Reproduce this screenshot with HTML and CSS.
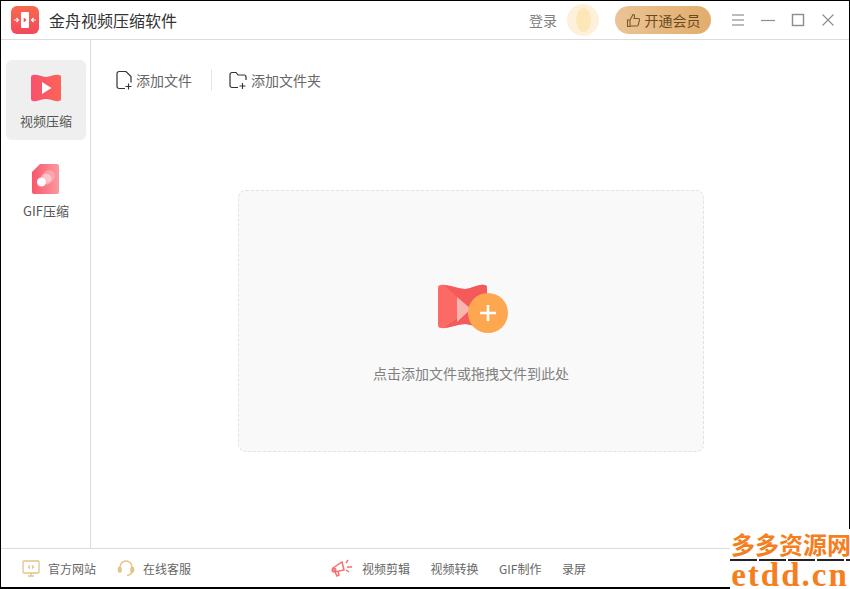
FILE: index.html
```html
<!DOCTYPE html>
<html lang="zh-CN">
<head>
  <meta charset="UTF-8">
  <title>金舟视频压缩软件</title>
  <link rel="stylesheet" href="styles.css">
</head>
<body>
  <div class="window">
    <header class="titlebar">
      <svg class="logo" width="28" height="28" viewBox="0 0 28 28">
        <defs>
          <linearGradient id="logoGrad" x1="0" y1="0" x2="0" y2="1">
            <stop offset="0" stop-color="#f76a4c"/>
            <stop offset="1" stop-color="#f4485c"/>
          </linearGradient>
        </defs>
        <rect width="28" height="28" rx="6" fill="url(#logoGrad)"/>
        <rect x="10" y="6" width="8" height="16" rx="1" fill="#fff"/>
        <path d="M12.700 11.500l3 2.500-3 2.500z" fill="#f4534f"/>
        <path d="M3 14h4M5.500 12l2 2-2 2M25 14h-4M22.500 12l-2 2 2 2" stroke="#fff" stroke-width="1.200" fill="none"/>
      </svg>
      <span class="app-name">金舟视频压缩软件</span>
      <div class="titlebar-right">
        <span class="login">登录</span>
        <div class="avatar"><div class="avatar-inner"></div></div>
        <button class="vip-btn">
          <svg width="15" height="15" viewBox="0 0 15 15" fill="none" stroke="#7a5526" stroke-width="1.100">
            <path d="M1.500 7h2.500v6.500h-2.500zM4 7l3-5.500c1.200 0 1.800 1 1.500 2.200l-.5 1.800h4.500c.8 0 1.200.7 1 1.400l-1.300 5.200c-.2.500-.5.900-1.100.900h-7.600"/>
          </svg>
          开通会员
        </button>
        <div class="win-controls">
          <svg width="14" height="14" viewBox="0 0 14 14" stroke="#a6a6a6" stroke-width="1.500"><path d="M1 2h12M1 7h12M1 12h12"/></svg>
          <svg width="14" height="14" viewBox="0 0 14 14" stroke="#8c8c8c" stroke-width="1.200"><path d="M0 7.500h14"/></svg>
          <svg width="14" height="14" viewBox="0 0 14 14" fill="none" stroke="#8c8c8c" stroke-width="1.400"><rect x="1.500" y="1.500" width="11" height="11"/></svg>
          <svg width="14" height="14" viewBox="0 0 14 14" stroke="#8c8c8c" stroke-width="1.100"><path d="M1.500 1.500l11 11M12.500 1.500l-11 11"/></svg>
        </div>
      </div>
    </header>

    <div class="body-row">
      <nav class="sidebar">
        <div class="side-item active">
          <svg width="32" height="30" viewBox="0 0 32 30">
            <defs>
              <linearGradient id="videoGrad" x1="0" y1="0" x2="1" y2="0">
                <stop offset="0" stop-color="#f9506d"/>
                <stop offset="1" stop-color="#fb6459"/>
              </linearGradient>
            </defs>
            <path d="M3 1C8 0 11 3 16 3S24 0 29 1a2 2 0 0 1 2 2V25a2 2 0 0 1-2 2C24 28 21 25 16 25S8 28 3 27a2 2 0 0 1-2-2V3a2 2 0 0 1 2-2z" fill="url(#videoGrad)"/>
            <path d="M12 8l9.500 6-9.500 6z" fill="#fff"/>
          </svg>
          <span>视频压缩</span>
        </div>
        <div class="side-item">
          <svg width="30" height="30" viewBox="0 0 30 30">
            <defs>
              <linearGradient id="gifGrad" x1="0" y1="0" x2="1" y2="0">
                <stop offset="0" stop-color="#f9566b"/>
                <stop offset="1" stop-color="#fb9a9f"/>
              </linearGradient>
            </defs>
            <path d="M9 0h17a2 2 0 0 1 2 2v26a2 2 0 0 1-2 2H3a2 2 0 0 1-2-2V8z" fill="url(#gifGrad)"/>
            <circle cx="18" cy="12" r="6" fill="#fff" opacity=".25"/>
            <circle cx="15" cy="15" r="5.500" fill="#fff" opacity=".4"/>
            <circle cx="10.500" cy="18" r="4.500" fill="#fff"/>
          </svg>
          <span>GIF压缩</span>
        </div>
      </nav>

      <main class="main">
        <div class="toolbar">
          <div class="tool">
            <svg width="16" height="20" viewBox="0 0 16 20" fill="none" stroke="#333" stroke-width="1.200">
              <path d="M9 18.500H3a2 2 0 0 1-2-2v-13a2 2 0 0 1 2-2h7l5 5v6"/>
              <path d="M9.500 16.500h6M12.500 13.500v6" stroke-width="1.100"/>
            </svg>
            <span>添加文件</span>
          </div>
          <div class="tool-sep"></div>
          <div class="tool">
            <svg width="18" height="19" viewBox="0 0 18 19" fill="none" stroke="#333" stroke-width="1.200">
              <path d="M9 16.500H3a2 2 0 0 1-2-2v-11a2 2 0 0 1 2-2h4l2 2.500h6a2 2 0 0 1 2 2v3"/>
              <path d="M10.500 15h6M13.500 12v6" stroke-width="1.100"/>
            </svg>
            <span>添加文件夹</span>
          </div>
        </div>

        <div class="dropzone-wrap">
          <div class="dropzone">
            <svg class="drop-icon" width="72" height="52" viewBox="0 0 72 52">
              <path d="M5 2C12 1 22 6 29 6S42 1 48 2a3 3 0 0 1 3 3V42a3 3 0 0 1-3 3C42 46 36 41 29 41S12 46 5 45a3 3 0 0 1-3-3V5a3 3 0 0 1 3-3z" fill="#fb6a64"/>
              <path d="M8 2C14 3 22 6 29 6S42 1 48 2a3 3 0 0 1 3 3V42a3 3 0 0 1-3 3C42 46 36 41 29 41S16 44 8 45L34 26z" fill="#f55a5a"/>
              <path d="M21 14l14 12-14 13z" fill="#f9b5b0"/>
              <circle cx="52" cy="30" r="20" fill="#fda851"/>
              <path d="M44 30h16M52 22v16" stroke="#fff" stroke-width="2.600"/>
            </svg>
            <p class="drop-tip">点击添加文件或拖拽文件到此处</p>
          </div>
        </div>
      </main>
    </div>

    <footer class="footer">
      <div class="foot-left">
        <div class="foot-link">
          <svg width="18" height="17" viewBox="0 0 18 17" fill="none" stroke="#e3c488" stroke-width="1.300">
            <rect x="1" y="1" width="16" height="12" rx="1"/>
            <path d="M6 16h6M9 13v3M8 5.500l-1.500 1.500 1.500 1.500M10 5.500l1.500 1.500-1.500 1.500"/>
          </svg>
          <span>官方网站</span>
        </div>
        <div class="foot-link">
          <svg width="18" height="18" viewBox="0 0 18 18" fill="none" stroke="#e3c488" stroke-width="1.500">
            <path d="M3 10V8a6 6 0 0 1 12 0v2M15 12c0 2.500-2 4-5 4.500"/>
            <rect x="1.500" y="8.500" width="2.500" height="4.500" rx="1" fill="#e3c488"/>
            <rect x="14" y="8.500" width="2.500" height="4.500" rx="1" fill="#e3c488"/>
          </svg>
          <span>在线客服</span>
        </div>
      </div>
      <div class="foot-tools">
        <svg width="22" height="20" viewBox="0 0 22 20" fill="none" stroke="#f4706e" stroke-width="1.500">
          <path d="M2 10l9-6 2 8-9 2zM4 14l2 4 2-1-1-4"/>
          <circle cx="3" cy="12" r="1.800"/>
          <path d="M15 5l2-3M16 9h5M15 12l3 2"/>
        </svg>
        <span>视频剪辑</span>
        <span>视频转换</span>
        <span>GIF制作</span>
        <span>录屏</span>
      </div>
    </footer>

    <div class="watermark">
      <div class="wm-cn">多多资源网</div>
      <div class="wm-line"></div>
      <div class="wm-en">etdd.cn</div>
    </div>
  </div>
</body>
</html>
```

FILE: styles.css
```css
* {
  box-sizing: border-box;
}
html, body {
  margin: 0;
  padding: 0;
}
body {
  font-family: "Noto Sans CJK SC", "Liberation Sans", sans-serif;
  background: #fff;
  color: #666;
}
.window {
  position: relative;
  width: 850px;
  height: 589px;
  border: 1px solid #000;
  border-bottom-width: 2px;
  display: flex;
  flex-direction: column;
  background: #fff;
}

/* title bar */
.titlebar {
  height: 39px;
  flex: none;
  display: flex;
  align-items: center;
  padding-left: 10px;
  border-bottom: 1px solid #dcdcdc;
}
.logo {
  flex: none;
}
.app-name {
  margin-left: 10px;
  font-size: 16px;
  color: #333;
}
.titlebar-right {
  margin-left: auto;
  display: flex;
  align-items: center;
}
.login {
  font-size: 14px;
  color: #808080;
}
.avatar {
  width: 32px;
  height: 32px;
  margin-left: 10px;
  border-radius: 50%;
  background: #fdf1dc;
  display: flex;
  align-items: center;
  justify-content: center;
}
.avatar-inner {
  width: 15px;
  height: 24px;
  border-radius: 50%;
  background: #fde7b8;
}
.vip-btn {
  width: 96px;
  height: 28px;
  margin-left: 16px;
  padding: 0;
  border: none;
  border-radius: 14px;
  background: linear-gradient(90deg, #eac497, #e2ad6c);
  color: #6b4a20;
  font-family: inherit;
  font-size: 14px;
  display: flex;
  align-items: center;
  justify-content: center;
  gap: 4px;
}
.win-controls {
  display: flex;
  align-items: center;
  gap: 16px;
  margin-left: 20px;
  margin-right: 14px;
}

/* body */
.body-row {
  flex: 1;
  display: flex;
  min-height: 0;
}
.sidebar {
  width: 90px;
  flex: none;
  border-right: 1px solid #dcdcdc;
  padding: 20px 4px 0 5px;
  display: flex;
  flex-direction: column;
  gap: 10px;
}
.side-item {
  height: 80px;
  padding-top: 14px;
  border-radius: 6px;
  display: flex;
  flex-direction: column;
  align-items: center;
  gap: 8px;
  font-size: 13px;
  line-height: 18px;
  color: #555;
}
.side-item.active {
  background: #efefef;
}

.main {
  flex: 1;
  display: flex;
  flex-direction: column;
}
.toolbar {
  height: 80px;
  flex: none;
  display: flex;
  align-items: center;
  padding-left: 25px;
}
.tool {
  display: flex;
  align-items: center;
  gap: 4px;
  font-size: 14px;
  color: #666;
}
.tool-sep {
  width: 1px;
  height: 22px;
  margin: 0 17px 0 19px;
  background: #e6e6e6;
}
.dropzone-wrap {
  padding: 70px 0 0 147px;
}
.dropzone {
  width: 466px;
  height: 262px;
  border: 1px dashed #e2e2e2;
  border-radius: 8px;
  background: #f9f9f9;
  display: flex;
  flex-direction: column;
  align-items: center;
  padding-top: 92px;
}
.drop-icon {
  margin-left: 2px;
}
.drop-tip {
  margin: 28px 0 0;
  font-size: 14px;
  line-height: 20px;
  color: #808080;
}

/* footer */
.footer {
  height: 39px;
  flex: none;
  border-top: 1px solid #dcdcdc;
  display: flex;
  align-items: center;
  font-size: 12px;
  color: #666;
}
.foot-left {
  display: flex;
  align-items: center;
  gap: 21px;
  padding-left: 21px;
}
.foot-link {
  display: flex;
  align-items: center;
  gap: 8px;
}
.foot-tools {
  display: flex;
  align-items: center;
  gap: 20.5px;
  margin-left: 140px;
}
.foot-tools svg {
  margin-right: -11.5px;
}

/* site stamp in the corner */
.watermark {
  position: absolute;
  right: -1px;
  bottom: -2px;
  width: 120px;
  height: 60px;
  background: #fff;
  color: #f57f20;
  text-align: center;
  font-weight: bold;
}
.wm-cn {
  font-size: 24px;
  line-height: 30px;
  padding-left: 1px;
  white-space: nowrap;
}
.wm-line {
  height: 2px;
  background: repeating-linear-gradient(90deg, #222 0, #222 27px, #fff 27px, #fff 29px);
}
.wm-en {
  font-family: "Liberation Serif", serif;
  font-size: 33px;
  line-height: 28px;
  letter-spacing: 2px;
  white-space: nowrap;
}
```
